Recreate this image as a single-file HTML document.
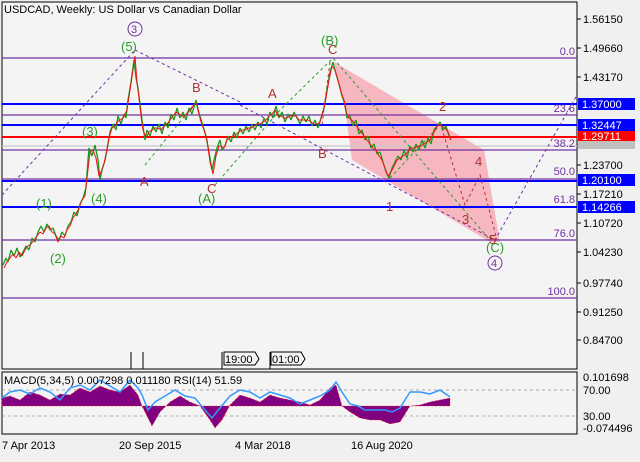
<!DOCTYPE html>
<html><head><style>
body{margin:0;width:640px;height:457px;background:#f0f0f0;overflow:hidden;font-family:"Liberation Sans",sans-serif}
svg text{font-family:"Liberation Sans",sans-serif;font-size:11px}
svg .w text{font-size:13px}
</style></head><body>
<svg width="640" height="457" xmlns="http://www.w3.org/2000/svg">
<rect x="0" y="0" width="640" height="457" fill="#f0f0f0"/>
<rect x="2" y="2" width="575" height="367" fill="#f4f4f4" stroke="#000" stroke-width="1"/>
<rect x="2" y="372" width="575" height="62" fill="#f4f4f4" stroke="#000" stroke-width="1"/>
<text x="4" y="13" fill="#000">USDCAD, Weekly:  US Dollar vs Canadian Dollar</text>
<polygon points="334,62 484,150 500,242 490,242 352,160 346,115" fill="#f7a8b4" opacity="0.8"/>
<g stroke-width="1.3">
<line x1="2" y1="58" x2="577" y2="58" stroke="#7030a0"/>
<line x1="2" y1="104" x2="577" y2="104" stroke="#0000ff" stroke-width="2"/>
<line x1="2" y1="115" x2="577" y2="115" stroke="#7030a0"/>
<line x1="2" y1="125" x2="577" y2="125" stroke="#0000ff" stroke-width="2"/>
<line x1="2" y1="137" x2="577" y2="137" stroke="#ff0000" stroke-width="2"/>
<line x1="2" y1="146" x2="577" y2="146" stroke="#c8c8c8"/>
<line x1="2" y1="150" x2="577" y2="150" stroke="#7030a0"/>
<line x1="2" y1="179" x2="577" y2="179" stroke="#7030a0"/>
<line x1="2" y1="181" x2="577" y2="181" stroke="#0000ff" stroke-width="2"/>
<line x1="2" y1="207" x2="577" y2="207" stroke="#0000ff" stroke-width="2"/>
<line x1="2" y1="240" x2="577" y2="240" stroke="#7030a0"/>
<line x1="2" y1="298" x2="577" y2="298" stroke="#7030a0"/>
</g>
<g fill="none" stroke="#7030a0" stroke-dasharray="3,3" stroke-width="1">
<polyline points="2,195 135,50"/>
<polyline points="135,50 240,102"/>
<polyline points="240,105 495,240 577,95"/>
</g>
<g fill="none" stroke="#2a9d2a" stroke-dasharray="3,3">
<polyline points="145,165 196,102"/><polyline points="215,185 280,110 333,58 490,240"/><polyline points="390,178 440,125"/>
</g>
<g fill="none" stroke="#b03030" stroke-dasharray="3,3">
<polyline points="330,62 322,125"/><polyline points="440,122 465,205 480,175 497,240"/>
</g>
<g fill="none" stroke-width="1.3" stroke-linejoin="bevel">
<polyline stroke="#1a9a1a" points="3,265 6,258 8,262 11,250 14,256 17,248 20,257 23,252 26,246 29,250 32,238 35,242 38,232 41,226 44,232 47,224 50,230 53,228 56,236 59,240 62,232 65,236 68,226 71,222 74,212 77,216 80,204 83,198 86,188 88,160 89,148 92,156 95,145 98,160 100,180 102,170 105,160 107,150 110,132 113,124 116,130 118,116 121,124 124,114 126,118 128,100 131,82 134,60 136,78 138,88 140,104 142,120 145,140 147,130 150,136 153,126 156,132 159,124 162,134 165,122 168,128 171,114 174,120 177,108 180,118 183,112 186,120 189,108 192,114 196,100 198,110 200,116 203,126 206,136 209,152 212,170 214,160 217,148 220,140 222,150 225,146 228,136 231,142 234,132 237,138 240,128 243,134 246,126 249,132 252,124 255,130 258,122 261,128 264,118 267,124 270,112 273,118 276,106 279,118 282,112 285,122 288,114 291,120 294,112 297,118 300,124 303,116 306,122 309,116 312,126 315,120 318,128 321,118 324,108 327,90 330,72 333,62 336,74 339,84 342,96 345,104 347,118 350,116 353,126 356,120 359,134 362,130 365,140 368,136 371,148 374,144 377,154 380,152 383,162 386,172 389,178 392,168 395,162 398,156 401,160 404,150 407,158 410,146 413,152 416,144 419,150 422,140 425,148 428,138 431,144 434,130 437,126 440,122 443,130 446,126 449,136 451,140"/>
<polyline stroke="#ee1111" stroke-width="1" points="4,268 7,262 10,258 13,254 16,258 19,252 22,256 25,250 28,246 31,244 34,240 37,236 40,232 43,234 46,228 49,226 52,232 55,234 58,242 61,236 64,238 67,230 70,226 73,218 76,214 79,208 82,200 85,196 87,178 90,152 93,150 96,158 99,176 101,172 104,164 106,154 109,138 112,128 115,126 117,122 120,120 123,118 127,110 130,90 133,70 135,56 137,82 139,98 141,116 143,130 146,138 149,132 152,130 155,128 158,128 161,130 164,126 167,124 170,120 173,116 176,112 179,114 182,116 185,116 188,112 191,110 194,104 197,104 199,114 201,122 204,130 207,140 210,162 213,174 216,156 219,146 221,146 224,148 227,140 230,138 233,136 236,134 239,132 242,130 245,130 248,128 251,128 254,126 257,124 260,124 263,122 266,120 269,116 272,114 275,110 278,116 281,116 284,118 287,118 290,116 293,116 296,116 299,120 302,120 305,120 308,120 311,122 314,124 317,124 320,122 323,112 326,98 329,80 332,66 335,70 338,80 341,92 344,100 346,112 349,118 352,120 355,124 358,128 361,132 364,136 367,140 370,144 373,148 376,150 379,156 382,160 385,168 388,176 391,172 394,166 397,160 400,158 403,156 406,154 409,150 412,148 415,148 418,146 421,146 424,144 427,142 430,140 433,134 436,128 439,124 442,126 445,128 448,132 451,140"/>
</g>
<g class="w" fill="#2a9d2a">
<text x="36" y="208">(1)</text><text x="50" y="263">(2)</text>
<text x="82" y="136">(3)</text><text x="91" y="203">(4)</text>
<text x="121" y="51">(5)</text><text x="198" y="203">(A)</text>
<text x="321" y="45">(B)</text><text x="486" y="252">(C)</text>
</g>
<g class="w" fill="#b03030"><text x="140" y="186">A</text><text x="192" y="92">B</text><text x="207" y="193">C</text>
<text x="268" y="98">A</text><text x="318" y="158">B</text><text x="328" y="54">C</text>
<text x="386" y="211">1</text><text x="439" y="111">2</text><text x="462" y="224">3</text><text x="475" y="166">4</text><text x="489" y="244">5</text></g>
<circle cx="135" cy="29" r="7" fill="none" stroke="#7030a0"/><text x="131" y="33" fill="#7030a0">3</text>
<circle cx="495" cy="263" r="7" fill="none" stroke="#7030a0"/><text x="491" y="267" fill="#7030a0">4</text>
<g fill="#7030a0" text-anchor="end"><text x="575" y="55">0.0</text><text x="575" y="112">23.6</text><text x="575" y="147">38.2</text><text x="575" y="175">50.0</text><text x="575" y="203">61.8</text><text x="575" y="237">76.0</text><text x="575" y="295">100.0</text></g>
<g fill="#000"><text x="583" y="23">1.56150</text><text x="583" y="52">1.49660</text><text x="583" y="81">1.43170</text><text x="583" y="169">1.23700</text><text x="583" y="198">1.17210</text><text x="583" y="227">1.10720</text><text x="583" y="256">1.04230</text><text x="583" y="287">0.97740</text><text x="583" y="316">0.91250</text><text x="583" y="344">0.84700</text>
<text x="583" y="381">0.101698</text><text x="583" y="394">70.00</text><text x="583" y="420">30.00</text><text x="583" y="432">-0.074496</text></g>
<g stroke="#000"><line x1="577" y1="19" x2="581" y2="19"/><line x1="577" y1="48" x2="581" y2="48"/><line x1="577" y1="77" x2="581" y2="77"/><line x1="577" y1="165" x2="581" y2="165"/><line x1="577" y1="194" x2="581" y2="194"/><line x1="577" y1="223" x2="581" y2="223"/><line x1="577" y1="252" x2="581" y2="252"/><line x1="577" y1="283" x2="581" y2="283"/><line x1="577" y1="312" x2="581" y2="312"/><line x1="577" y1="340" x2="581" y2="340"/></g>
<rect x="578" y="98" width="57" height="12" fill="#0000ff"/><text x="582" y="108" fill="#fff">1.37000</text>
<rect x="578" y="119" width="57" height="12" fill="#0000ff"/><text x="582" y="129" fill="#fff">1.32447</text>
<rect x="578" y="131" width="57" height="10" fill="#ff0000"/><text x="582" y="140" fill="#fff">1.29711</text>
<rect x="578" y="141" width="57" height="8" fill="#c0c0c0"/>
<rect x="578" y="174" width="57" height="12" fill="#0000ff"/><text x="582" y="184" fill="#fff">1.20100</text>
<rect x="578" y="201" width="57" height="12" fill="#0000ff"/><text x="582" y="211" fill="#fff">1.14266</text>
<g stroke="#000"><line x1="131" y1="352" x2="131" y2="369"/><line x1="143" y1="352" x2="143" y2="369"/><line x1="222" y1="352" x2="222" y2="369"/><line x1="270" y1="352" x2="270" y2="369"/></g>
<path d="M224,352 H255 L259,359 L255,365 H224 Z" fill="#f4f4f4" stroke="#000"/><text x="225" y="363">19:00</text>
<path d="M271,352 H301 L305,359 L301,365 H271 Z" fill="#f4f4f4" stroke="#000"/><text x="272" y="363">01:00</text>
<g stroke="#aaa" stroke-dasharray="3,3"><line x1="2" y1="390" x2="577" y2="390"/><line x1="2" y1="416" x2="577" y2="416"/></g>
<path fill="#800080" stroke="#ff2020" stroke-width="0.6" stroke-dasharray="2,2" d="M2,406 L2,398 10,396 20,400 30,392 40,395 50,400 60,394 70,395 80,388 90,392 100,386 110,390 120,392 130,385 138,395 142,406 148,418 152,426 160,412 170,402 180,396 190,402 200,406 210,420 215,428 222,420 230,405 240,395 250,398 260,402 270,395 280,398 290,400 300,402 310,405 320,400 330,388 336,385 342,406 350,412 360,418 370,420 380,420 390,424 400,422 410,406 420,405 430,402 440,400 450,398 450,406 Z"/>
<polyline fill="none" stroke="#3399ff" stroke-width="1.5" points="2,398 10,392 20,390 30,394 40,388 50,392 60,400 70,388 80,385 90,390 100,380 110,386 120,392 130,380 138,388 142,395 148,410 155,402 165,396 175,390 185,396 195,398 205,410 212,418 220,408 230,396 240,390 250,392 260,398 270,392 280,395 290,398 300,404 310,400 320,396 330,390 336,382 342,392 350,404 358,406 365,410 375,410 385,410 392,412 400,408 410,392 420,392 430,394 440,390 450,397"/>
<text x="4" y="384" fill="#000">MACD(5,34,5) 0.007298 0.011180 RSI(14) 51.59</text>
<g fill="#000"><text x="2" y="449">7 Apr 2013</text><text x="119" y="449">20 Sep 2015</text><text x="235" y="449">4 Mar 2018</text><text x="351" y="449">16 Aug 2020</text></g>
</svg>
</body></html>
